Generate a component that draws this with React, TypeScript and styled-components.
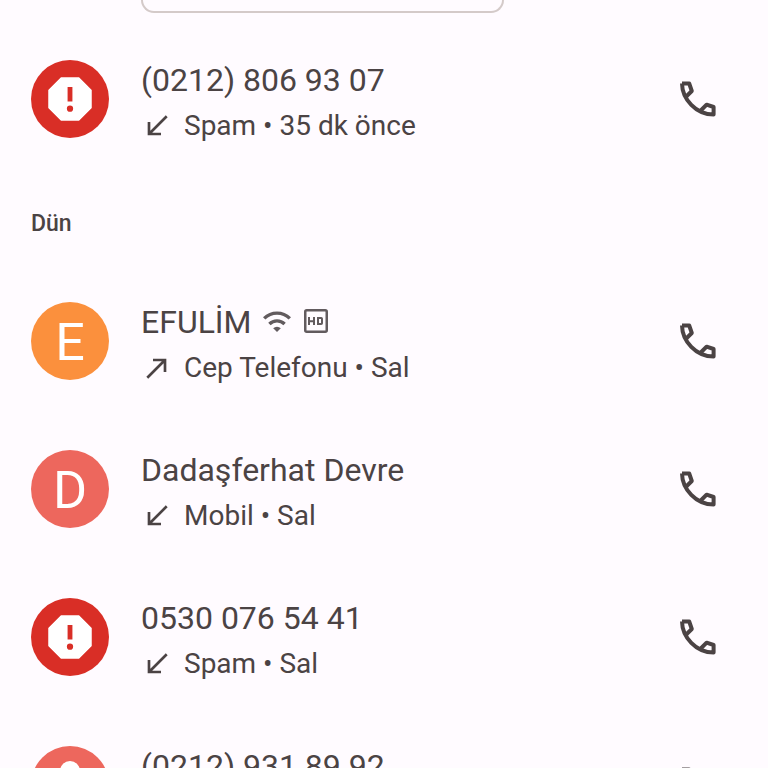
import React from "react";
import styled, { createGlobalStyle } from "styled-components";

const GlobalStyle = createGlobalStyle`
  *, *::before, *::after { box-sizing: border-box; }
  html { overflow: hidden; }
  body {
    margin: 0;
    background: #fffbff;
    color: #4b4344;
    font-family: Roboto, "Liberation Sans", sans-serif;
  }
`;

const Page = styled.main`
  height: 100vh;
  overflow: hidden;
`;

const Bubble = styled.div`
  height: 13px;
  max-width: 363px;
  margin: 0 0 12px 141px;
  border: 2px solid #d4cac9;
  border-top: 0;
  border-radius: 0 0 16px 16px;
`;

const DayTitle = styled.h2`
  margin: 0;
  padding: 37px 31px 29px;
  font-size: 23px;
  font-weight: 500;
  line-height: 28px;
`;

const List = styled.ul`
  list-style: none;
  margin: 0;
  padding: 0;
`;

const Row = styled.li`
  display: flex;
  align-items: center;
  height: 148px;
  padding: 0 46px 0 31px;
`;

const Avatar = styled.div<{ $color: string }>`
  display: flex;
  flex: none;
  align-items: center;
  justify-content: center;
  width: 78px;
  height: 78px;
  margin-right: 32px;
  overflow: hidden;
  border-radius: 50%;
  background: ${(p) => p.$color};
  color: #fff;
`;

const Initial = styled.span`
  padding-top: 4px;
  font-size: 52px;
  line-height: 60px;
`;

const Details = styled.div`
  flex: 1;
  min-width: 0;
  padding-top: 8px;
  white-space: nowrap;
`;

const Name = styled.div`
  display: flex;
  align-items: center;
  gap: 11px;
  height: 44px;
  margin-bottom: 2px;
  font-size: 32px;
  line-height: 44px;
`;

const Meta = styled.div`
  display: flex;
  align-items: center;
  gap: 11px;
  height: 44px;
  font-size: 28px;
  line-height: 44px;
`;

const CallButton = styled.button`
  display: flex;
  flex: none;
  padding: 0;
  border: 0;
  background: none;
  color: inherit;
  cursor: pointer;
`;

const Icon = styled.svg<{ $size: number }>`
  display: block;
  flex: none;
  width: ${(p) => p.$size}px;
  height: ${(p) => p.$size}px;
  fill: currentColor;
`;

const Badges = styled.span`
  display: flex;
  align-items: center;
  gap: 11px;
  color: #625b5e;
`;

const PhoneIcon = () => (
  <Icon $size={48} viewBox="0 0 48 48" aria-hidden>
    <path
      d="M8 8.5H15.2L17.8 16L12.2 21.5M8 8.5C8.2 24 22 39.5 39.6 39.6V32L32.6 29.7L26.3 36"
      fill="none"
      stroke="currentColor"
      strokeWidth="4"
      strokeLinejoin="round"
    />
  </Icon>
);

const DirectionIcon = ({ outgoing }: { outgoing: boolean }) => (
  <Icon $size={32} viewBox="0 0 24 24" role="img" aria-label={outgoing ? "Giden" : "Gelen"}>
    <path
      d={
        outgoing
          ? "M9 5v2h6.59L4 18.59 5.41 20 17 8.41V15h2V5z"
          : "M20 5.41 18.59 4 7 15.59V9H5v10h10v-2H8.41z"
      }
    />
  </Icon>
);

const SpamIcon = () => (
  <Icon $size={58} viewBox="0 0 24 24" aria-hidden>
    <path
      fillRule="evenodd"
      d="M15.73 3H8.27L3 8.27v7.46L8.27 21h7.46L21 15.73V8.27zM12 17.3a1.3 1.3 0 1 1 0-2.6 1.3 1.3 0 0 1 0 2.6zM13 13h-2V7h2z"
    />
  </Icon>
);

const PersonIcon = () => (
  <Icon $size={78} viewBox="0 0 78 78" aria-hidden>
    <circle cx="39" cy="25" r="10" />
    <path d="M19 59v-5c0-8 13-12 20-12s20 4 20 12v5z" />
  </Icon>
);

const WifiIcon = () => (
  <Icon $size={28} viewBox="0 0 28 28" aria-hidden>
    <g fill="none" stroke="currentColor" strokeWidth="3.4">
      <path d="M1.2 10.4a18.2 18.2 0 0 1 25.6 0" />
      <path d="M6.4 16a10.8 10.8 0 0 1 15.2 0" />
    </g>
    <path d="M14 24l-3.8-3.8a5.4 5.4 0 0 1 7.6 0z" />
  </Icon>
);

const HdIcon = () => (
  <Icon $size={28} viewBox="0 0 28 28" role="img" aria-label="HD">
    <g fill="none" stroke="currentColor" strokeWidth="2">
      <rect x="3.25" y="2.25" width="21.5" height="21.5" rx="1.5" strokeWidth="2.5" />
      <path d="M7 9v8M12 9v8M7 13.2h5M16 10h3.2q.8 0 .8.8v4.4q0 .8-.8.8H16z" />
    </g>
  </Icon>
);

type Call = {
  name: string;
  meta: string;
  color: string;
  avatar: "spam" | "person" | string;
  outgoing?: boolean;
  wifiHd?: boolean;
};

const today: Call[] = [
  { name: "(0212) 806 93 07", meta: "Spam • 35 dk önce", color: "#d92e26", avatar: "spam" },
];

const yesterday: Call[] = [
  { name: "EFULİM", meta: "Cep Telefonu • Sal", color: "#fb903d", avatar: "E", outgoing: true, wifiHd: true },
  { name: "Dadaşferhat Devre", meta: "Mobil • Sal", color: "#ed675d", avatar: "D" },
  { name: "0530 076 54 41", meta: "Spam • Sal", color: "#d92e26", avatar: "spam" },
  { name: "(0212) 931 89 92", meta: "Mobil • Sal", color: "#ed675d", avatar: "person" },
];

const AvatarContent = ({ kind }: { kind: string }) => {
  if (kind === "spam") return <SpamIcon />;
  if (kind === "person") return <PersonIcon />;
  return <Initial>{kind}</Initial>;
};

const CallRow = ({ call }: { call: Call }) => (
  <Row>
    <Avatar $color={call.color}>
      <AvatarContent kind={call.avatar} />
    </Avatar>
    <Details>
      <Name>
        {call.name}
        {call.wifiHd && (
          <Badges>
            <WifiIcon />
            <HdIcon />
          </Badges>
        )}
      </Name>
      <Meta>
        <DirectionIcon outgoing={!!call.outgoing} />
        {call.meta}
      </Meta>
    </Details>
    <CallButton type="button" aria-label={`Ara: ${call.name}`}>
      <PhoneIcon />
    </CallButton>
  </Row>
);

export default function App() {
  return (
    <Page>
      <GlobalStyle />
      <Bubble />
      <List>
        {today.map((c) => (
          <CallRow key={c.name} call={c} />
        ))}
      </List>
      <DayTitle>Dün</DayTitle>
      <List>
        {yesterday.map((c) => (
          <CallRow key={c.name} call={c} />
        ))}
      </List>
    </Page>
  );
}
